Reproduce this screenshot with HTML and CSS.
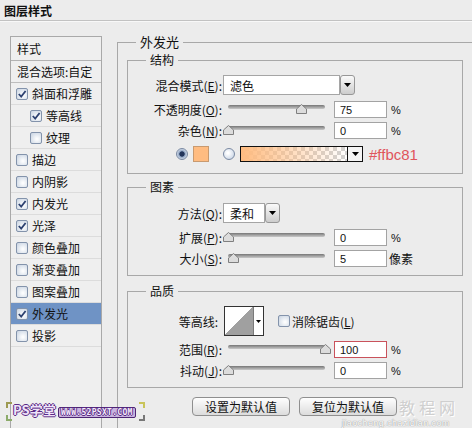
FILE: index.html
```html
<!DOCTYPE html>
<html lang="zh">
<head>
<meta charset="utf-8">
<title>图层样式</title>
<link rel="stylesheet" href="styles.css">
</head>
<body>
<div class="titlebar">图层样式</div>
<div class="main">
  <div class="sidebar">
    <div class="srow head">样式</div>
    <div class="srow blend">混合选项:自定</div>
    <div class="srow"><span class="cb"><svg viewBox="0 0 10 10"><path d="M1.8 5 L4.2 7.6 L8.6 2" /></svg></span>斜面和浮雕</div>
    <div class="srow sub"><span class="cb"><svg viewBox="0 0 10 10"><path d="M1.8 5 L4.2 7.6 L8.6 2" /></svg></span>等高线</div>
    <div class="srow sub"><span class="cb"></span>纹理</div>
    <div class="srow"><span class="cb"></span>描边</div>
    <div class="srow"><span class="cb"></span>内阴影</div>
    <div class="srow"><span class="cb"><svg viewBox="0 0 10 10"><path d="M1.8 5 L4.2 7.6 L8.6 2" /></svg></span>内发光</div>
    <div class="srow"><span class="cb"><svg viewBox="0 0 10 10"><path d="M1.8 5 L4.2 7.6 L8.6 2" /></svg></span>光泽</div>
    <div class="srow"><span class="cb"></span>颜色叠加</div>
    <div class="srow"><span class="cb"></span>渐变叠加</div>
    <div class="srow"><span class="cb"></span>图案叠加</div>
    <div class="srow sel"><span class="cb"><svg viewBox="0 0 10 10"><path d="M1.8 5 L4.2 7.6 L8.6 2" /></svg></span>外发光</div>
    <div class="srow"><span class="cb"></span>投影</div>
  </div>

  <div class="content">
    <fieldset class="outer">
      <legend class="olegend">外发光</legend>

      <fieldset class="group g1">
        <legend>结构</legend>
        <div class="row r-sel">
          <span class="lbl">混合模式(<u>E</u>):</span>
          <div class="select s-blend"><span class="sv">滤色</span><span class="sbtn"><svg width="7" height="4" viewBox="0 0 7 4"><path d="M0 0H7L3.5 4Z"/></svg></span></div>
        </div>
        <div class="row r-sl r-first">
          <span class="lbl">不透明度(<u>O</u>):</span>
          <div class="slider"><div class="track"></div><svg class="thumb" style="left:73px" width="11" height="10" viewBox="0 0 11 10"><path d="M5.5 0.5 L10.5 5 V9.5 H0.5 V5 Z"/></svg></div>
          <span class="num">75</span><span class="unit">%</span>
        </div>
        <div class="row r-sl">
          <span class="lbl">杂色(<u>N</u>):</span>
          <div class="slider"><div class="track"></div><svg class="thumb" style="left:0px" width="11" height="10" viewBox="0 0 11 10"><path d="M5.5 0.5 L10.5 5 V9.5 H0.5 V5 Z"/></svg></div>
          <span class="num">0</span><span class="unit">%</span>
        </div>
        <div class="crow">
          <span class="radio on"></span>
          <span class="swatch"></span>
          <span class="radio r2"></span>
          <div class="grad"><span class="gfill"></span><span class="gbtn"><svg width="7" height="4" viewBox="0 0 7 4"><path d="M0 0H7L3.5 4Z"/></svg></span></div>
          <span class="hex">#ffbc81</span>
        </div>
      </fieldset>

      <fieldset class="group g2">
        <legend>图素</legend>
        <div class="row r-sel">
          <span class="lbl">方法(<u>Q</u>):</span>
          <div class="select s-method"><span class="sv">柔和</span><span class="sbtn"><svg width="7" height="4" viewBox="0 0 7 4"><path d="M0 0H7L3.5 4Z"/></svg></span></div>
        </div>
        <div class="row r-sl r-first">
          <span class="lbl">扩展(<u>P</u>):</span>
          <div class="slider"><div class="track"></div><svg class="thumb" style="left:0px" width="11" height="10" viewBox="0 0 11 10"><path d="M5.5 0.5 L10.5 5 V9.5 H0.5 V5 Z"/></svg></div>
          <span class="num">0</span><span class="unit">%</span>
        </div>
        <div class="row r-sl">
          <span class="lbl">大小(<u>S</u>):</span>
          <div class="slider"><div class="track"></div><svg class="thumb" style="left:5px" width="11" height="10" viewBox="0 0 11 10"><path d="M5.5 0.5 L10.5 5 V9.5 H0.5 V5 Z"/></svg></div>
          <span class="num">5</span><span class="unit cjk">像素</span>
        </div>
      </fieldset>

      <fieldset class="group g3">
        <legend>品质</legend>
        <div class="row r-contour">
          <span class="lbl lbl-c">等高线:</span>
          <div class="contour"><span class="cv"></span><span class="cbtn"><svg width="5" height="3" viewBox="0 0 5 3"><path d="M0 0H5L2.5 3Z"/></svg></span></div>
          <span class="cb aa"></span><span class="aatext">消除锯齿(<u>L</u>)</span>
        </div>
        <div class="row r-sl r-range">
          <span class="lbl">范围(<u>R</u>):</span>
          <div class="slider"><div class="track"></div><svg class="thumb" style="left:97px" width="11" height="10" viewBox="0 0 11 10"><path d="M5.5 0.5 L10.5 5 V9.5 H0.5 V5 Z"/></svg></div>
          <span class="num red">100</span><span class="unit">%</span>
        </div>
        <div class="row r-sl">
          <span class="lbl">抖动(<u>J</u>):</span>
          <div class="slider"><div class="track"></div><svg class="thumb" style="left:0px" width="11" height="10" viewBox="0 0 11 10"><path d="M5.5 0.5 L10.5 5 V9.5 H0.5 V5 Z"/></svg></div>
          <span class="num">0</span><span class="unit">%</span>
        </div>
      </fieldset>

      <div class="btns">
        <span class="btn">设置为默认值</span>
        <span class="btn">复位为默认值</span>
      </div>
    </fieldset>
  </div>
</div>

<span class="corner c-tl"></span>
<span class="corner c-bl"></span>
<span class="corner c-tr"></span>
<span class="corner c-br"></span>
<span class="wm-ps">PS学堂</span>
<span class="wm-url">WWW.52PSXT.COM</span>
<span class="wm-jc">教程网</span>
<span class="wm-site">jiaocheng.chazidian.com</span>
</body>
</html>
```

FILE: styles.css
```css
html, body {
  margin: 0;
  overflow: hidden;
}
body {
  width: 472px;
  height: 428px;
  position: relative;
  background: #ececec;
  font-family: "Noto Sans CJK SC", "Noto Sans", sans-serif;
  font-size: 12px;
  color: #111;
}

/* title */
.titlebar {
  height: 20px;
  line-height: 22px;
  padding-left: 4px;
  font-weight: bold;
  font-size: 12px;
  border-bottom: 1px solid #c2c2c2;
  box-shadow: 0 1px 0 #f8f8f8;
}

.main {
  display: flex;
  align-items: flex-start;
}

/* sidebar */
.sidebar {
  margin: 15px 0 0 10px;
  width: 92px;
  height: 392px;
  box-sizing: border-box;
  border: 1px solid #a9a9a9;
  border-bottom: none;
  background: #efefef;
  flex: none;
}
.srow {
  height: 21px;
  border-bottom: 1px solid #dcdcdc;
  display: flex;
  align-items: center;
  padding-left: 5px;
  white-space: nowrap;
}
.srow.head {
  height: 23px;
  padding-left: 6px;
  border-bottom: 1px solid #b3b3b3;
}
.srow.blend {
  padding-left: 6px;
  border-bottom: 1px solid #bdbdbd;
}
.srow.sub {
  padding-left: 19px;
}
.srow.sel {
  background: #6f93c5;
}

.cb {
  width: 10px;
  height: 10px;
  border: 1px solid #8393ab;
  border-radius: 2px;
  background: radial-gradient(circle at 60% 60%, #fbfcfd 10%, #c9d4e2 95%);
  margin-right: 4px;
  display: inline-flex;
  flex: none;
}
.cb svg {
  width: 10px;
  height: 10px;
}
.cb path {
  fill: none;
  stroke: #2c4170;
  stroke-width: 1.8;
}

/* right content */
.content {
  margin: 13px 0 0 15px;
  flex: none;
}
fieldset {
  margin: 0;
  padding: 0;
  min-width: 0;
  border: 1px solid #a8a8a8;
}
legend {
  padding: 0 4px;
  margin-left: 18px;
  line-height: 16px;
  font-size: 12px;
}
.outer {
  width: 355px;
  height: 394px;
  box-sizing: border-box;
  padding: 2px 0 0 9px;
  border-right: none;
  border-bottom: none;
}
.outer > .olegend {
  margin-left: 9px;
  font-size: 13px;
}

.group {
  width: 336px;
  box-sizing: border-box;
}
.g1 { padding-bottom: 11px; }
.g2 { margin-top: 5px; padding-bottom: 8px; }
.g3 { margin-top: 7px; padding-bottom: 8px; }

.row {
  display: flex;
  align-items: center;
}
.lbl {
  width: 94px;
  flex: none;
  text-align: right;
  white-space: nowrap;
}
.lbl u {
  text-decoration: underline;
  text-underline-offset: 1px;
}

/* select */
.r-sel { margin-top: 7px; height: 20px; }
.g2 .r-sel { margin-top: 8px; }
.select {
  display: flex;
  height: 20px;
  margin-left: 1px;
}
.s-blend { width: 132px; }
.s-method { width: 57px; }
.select .sv {
  flex: 1;
  background: #fff;
  border: 1px solid #a5a5a5;
  padding-left: 6px;
  display: flex;
  align-items: center;
}
.select .sbtn {
  width: 15px;
  box-sizing: border-box;
  border: 1px solid #979797;
  border-radius: 3px;
  background: linear-gradient(#fafafa, #cdcdcd);
  display: flex;
  align-items: center;
  justify-content: center;
}

/* slider rows */
.r-sl {
  height: 17px;
  margin-top: 4px;
}
.r-sl.r-first { margin-top: 6px; }
.r-range { margin-top: 5px; }
.slider {
  position: relative;
  width: 106px;
  height: 17px;
  margin-left: 1px;
  flex: none;
}
.track {
  margin: 4px 0 0 5px;
  width: 97px;
  height: 4px;
  border-radius: 2px;
  background: linear-gradient(#767676, #a9a9a9 60%, #c9c9c9);
}
.thumb {
  position: absolute;
  top: 3px;
}
.thumb path {
  fill: #dcdcdc;
  stroke: #7f7f7f;
  stroke-width: 1;
}
.num {
  width: 53px;
  height: 17px;
  box-sizing: border-box;
  border: 1px solid #a3a3a3;
  background: #fff;
  margin-left: 5px;
  padding-left: 5px;
  display: flex;
  align-items: center;
  font: 11px "Liberation Sans", sans-serif;
  flex: none;
}
.num.red {
  border-color: #c9525b;
}
.unit {
  margin-left: 4px;
  font: 11px "Liberation Sans", sans-serif;
}
.unit.cjk {
  margin-left: 2px;
  font: 12px "Noto Sans CJK SC", sans-serif;
}

/* colour row */
.crow {
  display: flex;
  align-items: center;
  height: 16px;
  margin-top: 7px;
  padding-left: 48px;
}
.radio {
  width: 12px;
  height: 12px;
  box-sizing: border-box;
  border-radius: 50%;
  border: 1px solid #7a89a2;
  background: radial-gradient(circle at 40% 40%, #ffffff 10%, #c4d1e3 90%);
  flex: none;
}
.radio.on {
  background: radial-gradient(circle, #23355a 0 2.3px, #8ea3c2 3px, #dfe7f1 5.5px);
}
.radio.r2 {
  margin-left: 14px;
}
.swatch {
  width: 16px;
  height: 16px;
  box-sizing: border-box;
  margin-left: 5px;
  background: #ffbc81;
  border: 1px solid #c89a70;
  flex: none;
}
.grad {
  display: flex;
  width: 123px;
  height: 16px;
  box-sizing: border-box;
  border: 1px solid #111;
  margin-left: 5px;
  flex: none;
}
.gfill {
  flex: 1;
  background:
    linear-gradient(90deg, #ffbc81, rgba(255, 188, 129, 0.55) 45%, rgba(255, 188, 129, 0)),
    repeating-conic-gradient(#d2d2d2 0 25%, #ffffff 0 50%) 0 0 / 8px 8px;
}
.gbtn {
  width: 14px;
  border-left: 1px solid #111;
  background: #f4f4f4;
  display: flex;
  align-items: center;
  justify-content: center;
}
.hex {
  margin-left: 6px;
  color: #e0555c;
  font: 15px "Liberation Sans", sans-serif;
}

/* quality */
.r-contour {
  margin-top: 7px;
  height: 30px;
}
.lbl-c {
  padding-right: 4px;
  box-sizing: border-box;
}
.contour {
  display: flex;
  width: 40px;
  height: 30px;
  box-sizing: border-box;
  margin-left: 2px;
  border: 1px solid #333;
  background: #fff;
  flex: none;
}
.cv {
  width: 28px;
  background: linear-gradient(to top left, #a0a0a0 50%, #ffffff 50%);
}
.cbtn {
  flex: 1;
  border-left: 1px solid #7a7a7a;
  display: flex;
  align-items: center;
  justify-content: center;
}
.cb.aa {
  margin-left: 14px;
  margin-right: 2px;
}

/* buttons */
.btns {
  display: flex;
  gap: 9px;
  margin-top: 9px;
  padding-left: 65px;
}
.btn {
  width: 98px;
  height: 19px;
  box-sizing: border-box;
  border: 1px solid #8f8f8f;
  border-radius: 4px;
  background: linear-gradient(#fefefe, #dcdcdc);
  display: flex;
  align-items: center;
  justify-content: center;
}

/* watermarks (overlay) */
.corner {
  position: absolute;
  width: 4px;
  height: 4px;
}
.c-tl { left: 6px; top: 402px; border-top: 2px solid #9d9a52; border-left: 2px solid #9d9a52; }
.c-bl { left: 6px; top: 415px; border-bottom: 2px solid #8cab6a; border-left: 2px solid #8cab6a; }
.c-tr { left: 139px; top: 402px; border-top: 2px solid #c9c45a; border-right: 2px solid #c9c45a; }
.c-br { left: 139px; top: 415px; border-bottom: 2px solid #777; border-right: 2px solid #777; }
.wm-ps {
  position: absolute;
  left: 13px;
  top: 402px;
  font: bold 13px/16px "Noto Sans CJK SC", sans-serif;
  color: #efe3f8;
  text-shadow: 1px 0 #5a2a86, -1px 0 #5a2a86, 0 1px #5a2a86, 0 -1px #5a2a86;
}
.wm-url {
  position: absolute;
  left: 58px;
  top: 407px;
  padding: 0 2px;
  font: bold 8px/9px "DejaVu Sans Mono", monospace;
  letter-spacing: 0.3px;
  color: #f4ecfa;
  background: #c9b3df;
  border: 1px solid #4d2574;
  border-radius: 2px;
  text-shadow: 1px 0 #5a2a86, -1px 0 #5a2a86, 0 1px #5a2a86, 0 -1px #5a2a86;
}
.wm-jc {
  position: absolute;
  left: 399px;
  top: 398px;
  font: 16px/18px "Noto Sans CJK SC", sans-serif;
  letter-spacing: 4px;
  color: #cfcfcf;
  text-shadow: 1px 1px #ffffff;
}
.wm-site {
  position: absolute;
  left: 342px;
  top: 418px;
  font: 9px/10px "Liberation Sans", sans-serif;
  letter-spacing: 0.4px;
  color: #ffffff;
  text-shadow: 0 0 1px #9a9a9a, 0 0 1px #9a9a9a;
}
```
